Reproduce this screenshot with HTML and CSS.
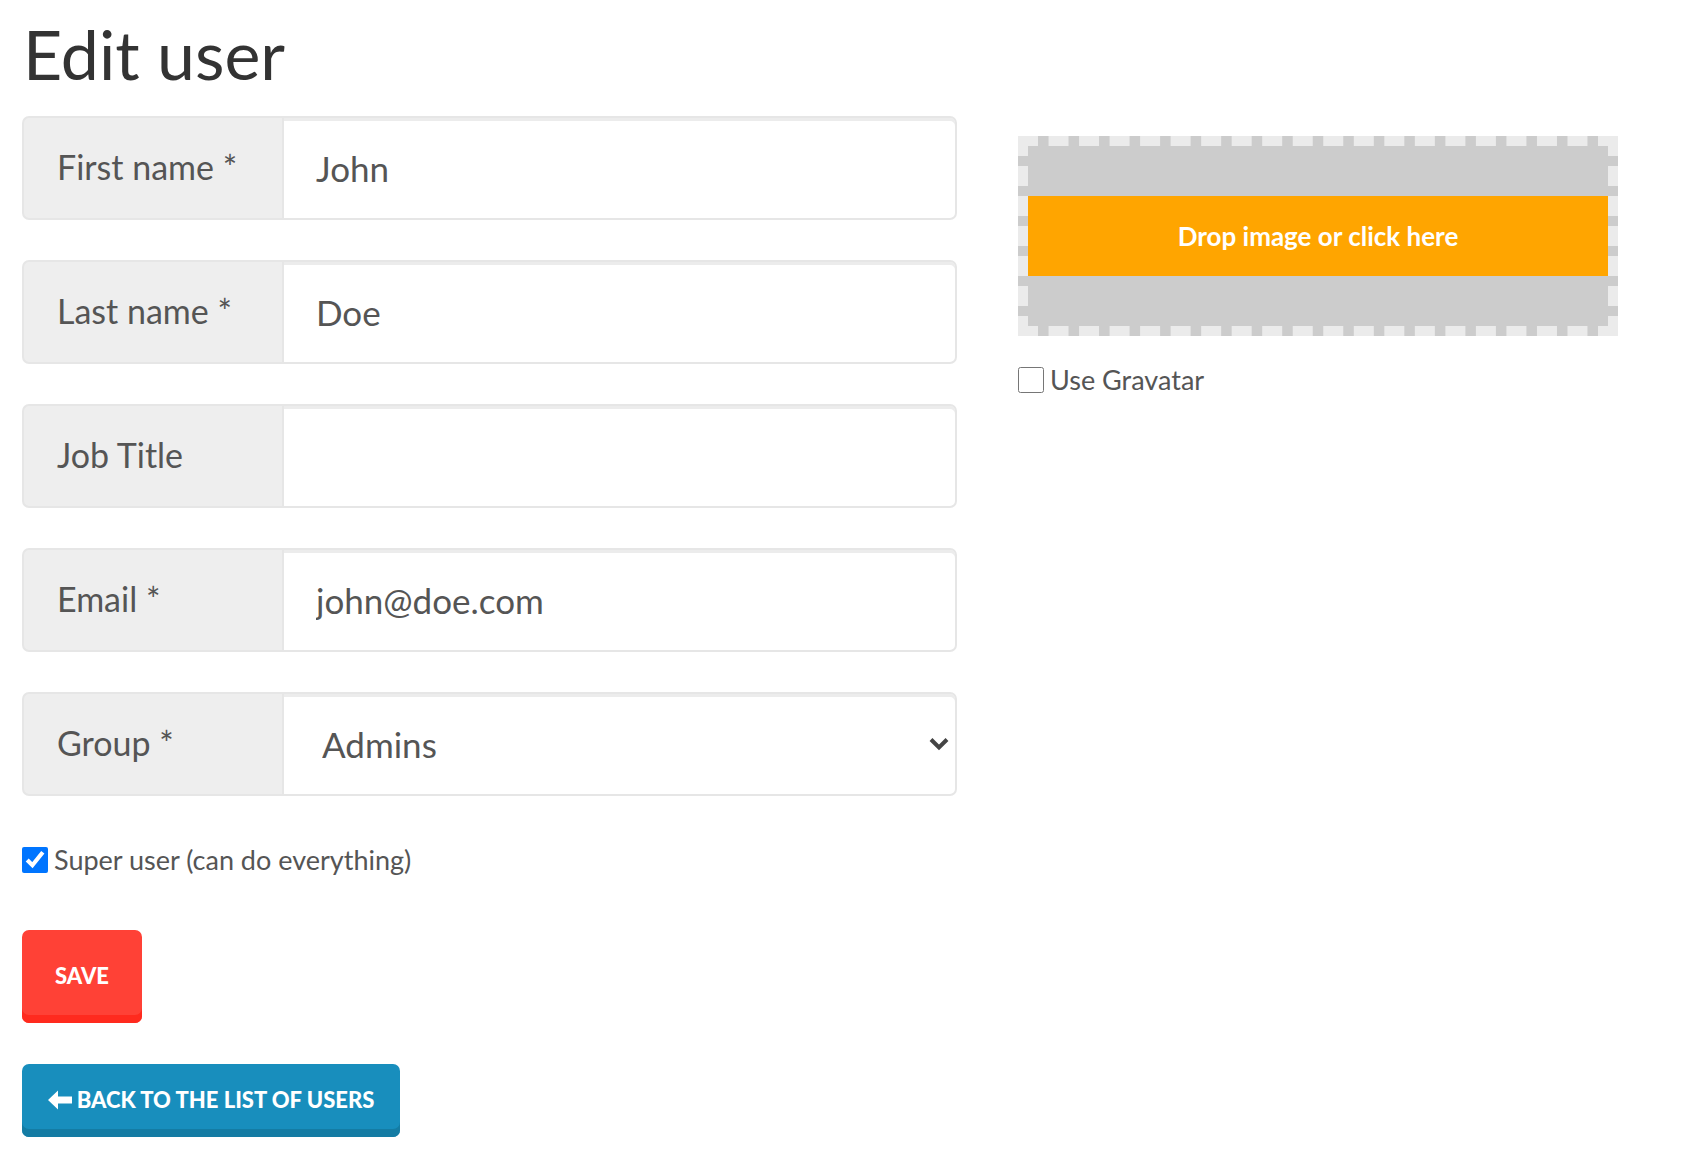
FILE: index.html
```html
<!DOCTYPE html>
<html>
<head>
<meta charset="utf-8">
<link rel="stylesheet" href="styles.css">
</head>
<body>
<h1 class="title">Edit user</h1>
<div class="layout">
  <form class="form">
    <div class="group">
      <label class="addon">First name *</label>
      <input class="field" type="text" value="John">
    </div>
    <div class="group">
      <label class="addon">Last name *</label>
      <input class="field" type="text" value="Doe">
    </div>
    <div class="group">
      <label class="addon">Job Title</label>
      <input class="field" type="text" value="">
    </div>
    <div class="group">
      <label class="addon">Email *</label>
      <input class="field" type="text" value="john@doe.com">
    </div>
    <div class="group">
      <label class="addon">Group *</label>
      <div class="select-wrap">
        <select class="field select"><option>Admins</option></select>
        <svg class="chevron" viewBox="0 0 20 14" width="20" height="14"><path d="M2 2.5 L10 10.5 L18 2.5" fill="none" stroke="#444" stroke-width="4"/></svg>
      </div>
    </div>
    <label class="check super"><input type="checkbox" checked class="cb"><span>Super user (can do everything)</span></label>
    <div class="actions">
      <button type="button" class="btn btn-save">SAVE</button>
      <button type="button" class="btn btn-back"><svg class="arrow" viewBox="0 0 24 20" width="24" height="20"><path d="M0 10 L10 0.5 L10 6.5 L24 6.5 L24 13.5 L10 13.5 L10 19.5 Z" fill="#fff"/></svg>BACK TO THE LIST OF USERS</button>
    </div>
  </form>
  <aside class="side">
    <div class="dropzone"><div class="dropband">Drop image or click here</div></div>
    <label class="check gravatar"><input type="checkbox" class="cb"><span>Use Gravatar</span></label>
  </aside>
</div>
</body>
</html>
```

FILE: styles.css
```css
html, body {
  margin: 0;
  padding: 0;
  background: #fff;
}
body {
  font-family: Lato, "Open Sans", sans-serif;
  color: #555;
  padding: 0 22px;
}
.title {
  font-family: Lato, sans-serif;
  font-weight: 400;
  font-size: 68px;
  line-height: 80px;
  color: #333;
  margin: 14px 0 22px 1px;
}
.layout {
  display: flex;
  align-items: flex-start;
  gap: 61px;
}
.form {
  width: 935px;
  display: flex;
  flex-direction: column;
}
.group {
  display: flex;
  height: 104px;
  margin-bottom: 40px;
}
.addon {
  box-sizing: border-box;
  width: 260px;
  background: #eee;
  border: 2px solid #e6e6e6;
  border-right: none;
  border-radius: 7px 0 0 7px;
  display: flex;
  align-items: center;
  padding: 0 0 4px 33px;
  font-size: 34px;
  color: #555;
}
.field {
  box-sizing: border-box;
  flex: 1;
  height: 104px;
  margin: 0;
  border: 2px solid #e6e6e6;
  border-radius: 0 7px 7px 0;
  box-shadow: inset 0 3px 0 #ececec;
  background: #fff;
  font-family: Lato, sans-serif;
  font-size: 35px;
  color: #555;
  padding: 0 0 0 32px;
  outline: none;
}
.select-wrap {
  flex: 1;
  position: relative;
  display: flex;
}
.select {
  appearance: none;
  -webkit-appearance: none;
  padding-left: 38px;
}
.chevron {
  position: absolute;
  right: 8px;
  top: 45px;
}
.check {
  display: flex;
  align-items: center;
  gap: 6px;
  color: #555;
  font-size: 27px;
}
.cb {
  margin: 0;
  width: 26px;
  height: 26px;
}
.super {
  margin-top: 7px;
}
.actions {
  display: flex;
  flex-direction: column;
  align-items: flex-start;
  gap: 41px;
  margin-top: 54px;
}
.btn {
  border: none;
  color: #fff;
  font-family: Lato, sans-serif;
  font-weight: 900;
  font-size: 22px;
  border-radius: 7px;
  cursor: pointer;
  display: flex;
  align-items: center;
  letter-spacing: 0;
}
.btn-save {
  width: 120px;
  height: 93px;
  justify-content: center;
  background: #ff4136;
  box-shadow: inset 0 -8px 0 #ff2a1e;
  padding: 0 0 2px;
}
.btn-back {
  width: 378px;
  height: 73px;
  justify-content: center;
  background: #188ebd;
  box-shadow: inset 0 -8px 0 #147ca4;
  padding: 0 0 2px;
  gap: 5px;
}
.side {
  width: 600px;
  padding-top: 20px;
}
.dropzone {
  box-sizing: border-box;
  height: 200px;
  border: 10px dashed #ebebeb;
  background: #ccc;
  display: flex;
  align-items: center;
}
.dropband {
  width: 100%;
  height: 80px;
  background: #ffa500;
  color: #fff;
  font-size: 26px;
  font-weight: 700;
  display: flex;
  align-items: center;
  justify-content: center;
}
.gravatar {
  margin-top: 27px;
}
```
